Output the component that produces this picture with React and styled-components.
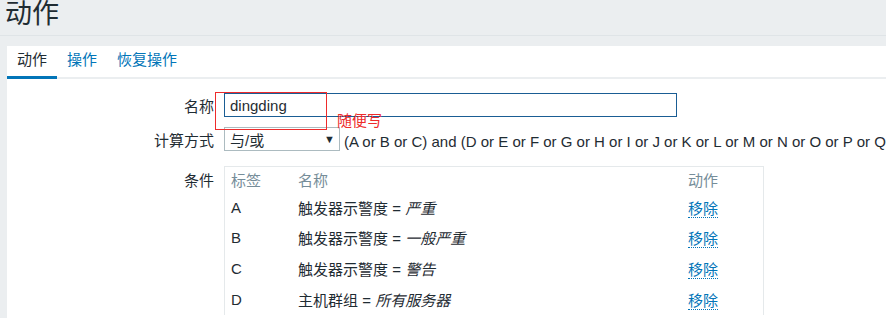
import React from 'react';
import styled, { createGlobalStyle } from 'styled-components';

const Global = createGlobalStyle`
  html, body {
    margin: 0;
    padding: 0;
    background: #ebeef0;
    overflow: hidden;
  }
  body {
    font-family: "Liberation Sans", "Noto Sans CJK SC", sans-serif;
    font-size: 15px;
    color: #1f2c33;
  }
`;

const Page = styled.div`
  width: 886px;
  height: 318px;
  overflow: hidden;
`;

const Header = styled.div`
  height: 36px;
  box-sizing: border-box;
  padding-left: 5px;
  border-bottom: 1px solid #dfe4e7;
`;

const Title = styled.h1`
  margin: 0;
  font-size: 27px;
  font-weight: normal;
  line-height: 29px;
  color: #1f2c33;
`;

const Panel = styled.div`
  margin: 10px 0 0 7px;
  background: #fff;
  height: 300px;
`;

const Tabs = styled.div`
  display: flex;
  height: 33px;
  box-sizing: border-box;
  border-bottom: 2px solid #ebeef0;
`;

const Tab = styled.div`
  padding: 0 10px;
  line-height: 28px;
  margin-bottom: -2px;
  color: ${p => (p.active ? '#1f2c33' : '#0275b8')};
  border-bottom: 3px solid ${p => (p.active ? '#0275b8' : 'transparent')};
`;

const Form = styled.div`
  position: relative;
  padding-top: 14px;
`;

const Row = styled.div`
  display: flex;
  align-items: flex-start;
  margin-bottom: ${p => p.gap || 10}px;
`;

const Label = styled.div`
  width: 207px;
  text-align: right;
  padding-right: 10px;
  padding-top: ${p => p.top || 2}px;
  flex-shrink: 0;
`;

const TextInput = styled.input`
  width: 453px;
  height: 24px;
  box-sizing: border-box;
  border: 1px solid #1a5d94;
  padding: 0 5px;
  font: inherit;
  color: #1f2c33;
  outline: none;
`;

const Select = styled.div`
  width: 116px;
  height: 24px;
  box-sizing: border-box;
  border: 1px solid #acbbc0;
  display: flex;
  align-items: center;
  justify-content: space-between;
  padding: 0 4px 0 5px;
  flex-shrink: 0;
`;

const Caret = styled.span`
  font-size: 11px;
  color: #1f2c33;
`;

const Expression = styled.div`
  margin-left: 4px;
  white-space: nowrap;
  line-height: 24px;
  padding-top: 3px;
`;

const Table = styled.div`
  width: 540px;
  box-sizing: border-box;
  border: 1px solid #e5e9eb;
  border-bottom: none;
`;

const TRow = styled.div`
  display: grid;
  grid-template-columns: 67px 390px 1fr;
  height: ${p => (p.head ? 25 : 30.67)}px;
  align-items: center;
  color: ${p => (p.head ? '#768d99' : '#1f2c33')};
`;

const Cell = styled.div`
  padding: 0 6px;
  white-space: nowrap;
`;

const Value = styled.em`
  font-style: italic;
`;

const Remove = styled.span`
  color: #0275b8;
  border-bottom: 1px dotted #0275b8;
`;

const Annotation = styled.div`
  position: absolute;
  left: 208px;
  top: 13px;
  width: 110px;
  height: 36px;
  border: 1px solid #ee2b2b;
`;

const Note = styled.div`
  position: absolute;
  left: 330px;
  top: 30px;
  color: #ee2b2b;
`;

const conditions = [
  { tag: 'A', name: '触发器示警度', value: '严重' },
  { tag: 'B', name: '触发器示警度', value: '一般严重' },
  { tag: 'C', name: '触发器示警度', value: '警告' },
  { tag: 'D', name: '主机群组', value: '所有服务器' },
];

export default function App() {
  return (
    <Page>
      <Global />
      <Header>
        <Title>动作</Title>
      </Header>
      <Panel>
        <Tabs>
          <Tab active>动作</Tab>
          <Tab>操作</Tab>
          <Tab>恢复操作</Tab>
        </Tabs>
        <Form>
          <Row>
            <Label>名称</Label>
            <TextInput defaultValue="dingding" />
          </Row>
          <Row gap={12}>
            <Label>计算方式</Label>
            <Select>
              <span>与/或</span>
              <Caret>▼</Caret>
            </Select>
            <Expression>
              (A or B or C) and (D or E or F or G or H or I or J or K or L or M or N or O or P or Q or R)
            </Expression>
          </Row>
          <Row>
            <Label top={3}>条件</Label>
            <Table>
              <TRow head>
                <Cell>标签</Cell>
                <Cell>名称</Cell>
                <Cell>动作</Cell>
              </TRow>
              {conditions.map(c => (
                <TRow key={c.tag}>
                  <Cell>{c.tag}</Cell>
                  <Cell>
                    {c.name} = <Value>{c.value}</Value>
                  </Cell>
                  <Cell>
                    <Remove>移除</Remove>
                  </Cell>
                </TRow>
              ))}
            </Table>
          </Row>
          <Annotation />
          <Note>随便写</Note>
        </Form>
      </Panel>
    </Page>
  );
}
